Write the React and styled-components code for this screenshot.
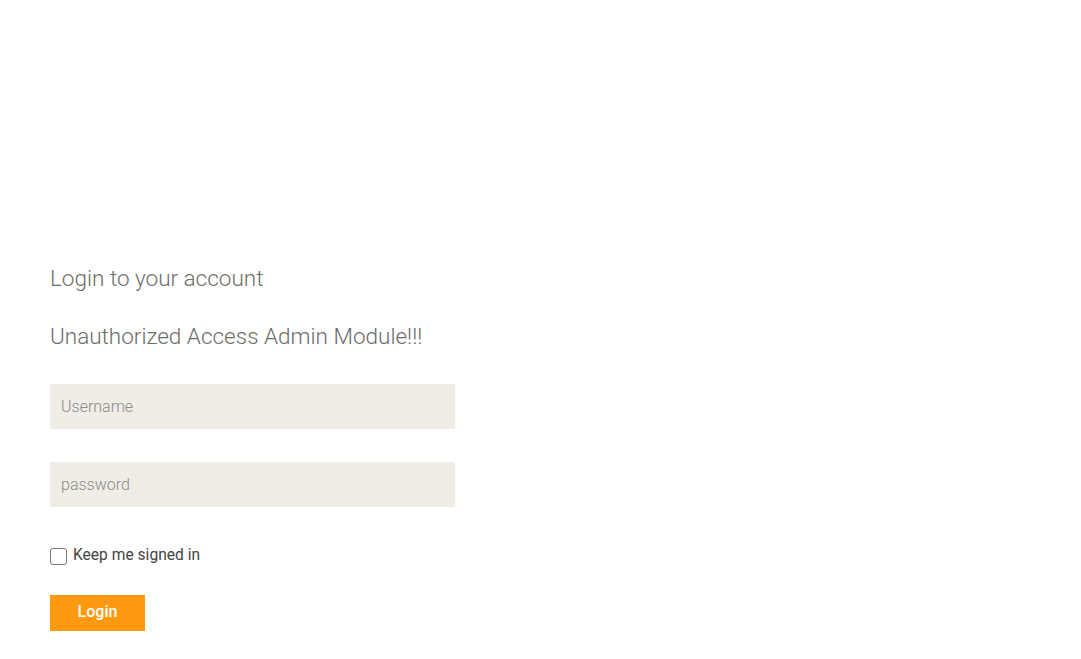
import React from "react";
import styled, { createGlobalStyle } from "styled-components";

const Global = createGlobalStyle`
  html, body { margin: 0; padding: 0; background: #fff; }
  body { font-family: Roboto, "Noto Sans", sans-serif; }
  * { box-sizing: border-box; }
`;

const Page = styled.div`
  padding: 264px 0 0 50px;
  width: 1081px;
`;

const Form = styled.form`
  width: 405px;
  display: flex;
  flex-direction: column;
`;

const Title = styled.h2`
  margin: 0;
  font-family: Roboto, sans-serif;
  font-weight: 300;
  font-size: 22.5px;
  line-height: 28px;
  color: #6d6d6a;
  margin-bottom: ${(p) => p.$gap || 0}px;
`;

const Input = styled.input`
  width: 405px;
  height: 45px;
  border: none;
  outline: none;
  background: #efede6;
  padding: 0 11px;
  font-family: Roboto, sans-serif;
  font-weight: 300;
  font-size: 16px;
  color: #444;
  margin-bottom: ${(p) => p.$gap || 0}px;
  &::placeholder { color: #8a8a8a; }
`;

const CheckRow = styled.label`
  display: flex;
  align-items: center;
  gap: 6px;
  font-family: Roboto, sans-serif;
  font-size: 15.6px;
  color: #444;
  height: 20px;
  margin-bottom: 30px;
`;

const Box = styled.input`
  margin: 2px 0 0 0;
  width: 17px;
  height: 17px;
  appearance: none;
  border: 1px solid #767676;
  border-radius: 3px;
  background: #fff;
`;

const Button = styled.button`
  width: 95px;
  height: 36px;
  border: none;
  background: #ff9a10;
  color: #fff;
  font-family: Roboto, sans-serif;
  font-weight: 500;
  font-size: 16px;
  line-height: 34px;
  padding: 0 0 2px;
  cursor: pointer;
`;

export default function App() {
  return (
    <>
      <Global />
      <Page>
        <Form onSubmit={(e) => e.preventDefault()}>
          <Title $gap={30}>Login to your account</Title>
          <Title $gap={34}>Unauthorized Access Admin Module!!!</Title>
          <Input placeholder="Username" $gap={33} />
          <Input type="password" placeholder="password" $gap={38} />
          <CheckRow>
            <Box type="checkbox" />
            Keep me signed in
          </CheckRow>
          <Button type="submit">Login</Button>
        </Form>
      </Page>
    </>
  );
}
